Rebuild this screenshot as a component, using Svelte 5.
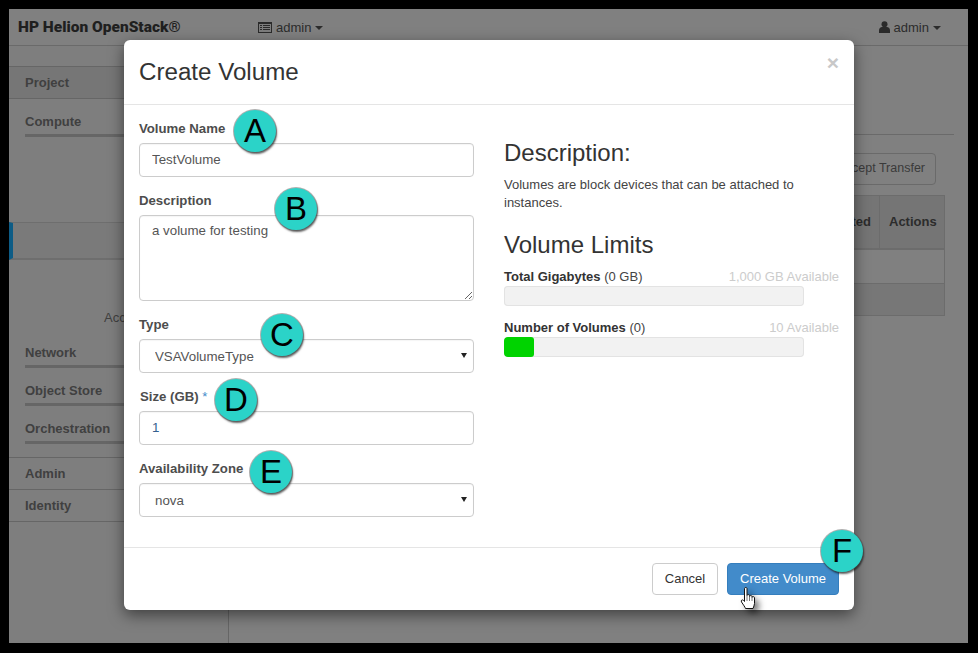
<script>
  const bars = [
    { label: "Total Gigabytes", used: "(0 GB)", avail: "1,000 GB Available", fill: 0 },
    { label: "Number of Volumes", used: "(0)", avail: "10 Available", fill: 10 },
  ];
  const badges = [
    { letter: "A", x: 234, y: 110 },
    { letter: "B", x: 275, y: 188 },
    { letter: "C", x: 261, y: 314 },
    { letter: "D", x: 215, y: 379 },
    { letter: "E", x: 250, y: 451 },
    { letter: "F", x: 821, y: 530 },
  ];
</script>

<div class="screen">
  <div class="window">
    <header class="topbar">
      <div class="brand">HP Helion OpenStack®</div>
      <div class="menu project-menu">
        <svg width="14" height="11" viewBox="0 0 14 11"><path fill="#2a2a2a" d="M0 0h14v11H0z"/><path fill="#7d7d7d" d="M1 2h12v8H1z"/><path fill="#2a2a2a" d="M2 3h2v1H2zM5 3h7v1H5zM2 5h2v1H2zM5 5h7v1H5zM2 7h2v1H2zM5 7h7v1H5z"/></svg>
        <span>admin</span><i class="caret"></i>
      </div>
      <div class="menu user-menu">
        <svg width="11" height="12" viewBox="0 0 11 12"><circle cx="5.5" cy="3.2" r="3" fill="#2a2a2a"/><path fill="#2a2a2a" d="M0 12V9.2C0 7.4 1.4 6 3 6h5c1.600 0 3 1.400 3 3.200V12z"/></svg>
        <span>admin</span><i class="caret"></i>
      </div>
    </header>

    <div class="page">
      <nav class="sidebar">
        <div class="row first">Project</div>
        <div class="group compute">Compute</div>
        <div class="row active"></div>
        <div class="sub">Access &amp; Security</div>
        <div class="group">Network</div>
        <div class="group">Object Store</div>
        <div class="group">Orchestration</div>
        <div class="row admin">Admin</div>
        <div class="row">Identity</div>
      </nav>
      <main class="main">
        <div class="title-line"></div>
        <div class="actions"><button class="ghost">Accept Transfer</button></div>
        <table>
          <thead>
            <tr><th class="created">Created</th><th class="act">Actions</th></tr>
          </thead>
          <tbody>
            <tr class="r1"><td></td><td></td></tr>
            <tr class="r2"><td></td><td></td></tr>
          </tbody>
        </table>
      </main>
    </div>

    <section class="modal">
      <div class="modal-head">
        <h3>Create Volume</h3>
        <span class="close">×</span>
      </div>
      <div class="modal-body">
        <form class="left">
          <div class="field">
            <label for="vn">Volume Name</label>
            <input id="vn" value="TestVolume" />
          </div>
          <div class="field">
            <label for="ds">Description</label>
            <textarea id="ds">a volume for testing</textarea>
          </div>
          <div class="field">
            <label for="ty">Type</label>
            <div class="select">
              <select id="ty"><option>VSAVolumeType</option></select>
            </div>
          </div>
          <div class="field">
            <label for="sz" class="size">Size (GB) <em>*</em></label>
            <input id="sz" class="blue" value="1" />
          </div>
          <div class="field">
            <label for="az">Availability Zone</label>
            <div class="select">
              <select id="az"><option>nova</option></select>
            </div>
          </div>
        </form>
        <aside class="right">
          <h3>Description:</h3>
          <p>Volumes are block devices that can be attached to instances.</p>
          <h3 class="limits">Volume Limits</h3>
          {#each bars as b}
            <div class="quota">
              <div class="quota-text">
                <span><strong>{b.label}</strong> {b.used}</span>
                <span class="avail">{b.avail}</span>
              </div>
              <div class="bar">
                {#if b.fill}<div class="fill" style="width: {b.fill}%"></div>{/if}
              </div>
            </div>
          {/each}
        </aside>
      </div>
      <div class="modal-foot">
        <button class="cancel">Cancel</button>
        <button class="primary">Create Volume</button>
      </div>
    </section>

    {#each badges as b}
      <div class="badge" style="left: {b.x - 9}px; top: {b.y - 9}px">{b.letter}</div>
    {/each}

    <svg class="hand" width="20" height="24" viewBox="0 0 20 24">
      <path fill="#fff" stroke="#111" stroke-width="1" stroke-linejoin="round" d="M4.500 1.500c0-1.300 2.500-1.300 2.500 0v7c0-1.200 2.500-1.200 2.500 0v1c0-1.200 2.500-1.200 2.500 0v1c0-1.200 2.500-1.200 2.500 .2v5.800c0 2-1 3-1.500 5H5.500C5 20 3.500 18 1.500 15c-1-1.600.8-2.800 2-1.600l1 1.100z"/>
      <path stroke="#555" stroke-width=".8" d="M7 9v5M9.500 10v4M12 11v3"/>
    </svg>
  </div>
</div>

<style>
  :global(body) {
    margin: 0;
    background: #000;
  }
  .screen {
    width: 978px;
    height: 653px;
    padding: 9px 10px 10px 9px;
    box-sizing: border-box;
    background: #000;
    font-family: "Liberation Sans", Arial, sans-serif;
    color: #3a3a3a;
    overflow: hidden;
  }
  .window {
    position: relative;
    width: 959px;
    height: 634px;
    background: #808080;
    overflow: hidden;
  }
  .topbar {
    display: flex;
    align-items: center;
    height: 36px;
    border-bottom: 1px solid #6a6a6a;
    color: #2c2c2c;
    font-size: 13px;
  }
  .brand {
    width: 240px;
    padding-left: 9px;
    box-sizing: border-box;
    font-family: Roboto, "Liberation Sans", sans-serif;
    font-weight: 900;
    font-size: 15.5px;
    color: #1f1f1f;
    white-space: nowrap;
  }
  .menu {
    display: flex;
    align-items: center;
  }
  .menu svg {
    margin-right: 4px;
  }
  .project-menu {
    margin-left: 9px;
  }
  .user-menu {
    margin-left: auto;
    margin-right: 27px;
  }
  .caret {
    width: 0;
    height: 0;
    margin-left: 4px;
    margin-top: 2px;
    border-left: 4px solid transparent;
    border-right: 4px solid transparent;
    border-top: 4px solid #2c2c2c;
  }
  .page {
    display: flex;
    height: 597px;
  }
  .sidebar {
    width: 219px;
    flex-shrink: 0;
    border-right: 1px solid #666;
    padding-top: 20px;
    font-size: 13px;
    font-weight: 700;
    color: #404040;
    background: #7e7e7e;
  }
  .row {
    height: 31px;
    line-height: 31px;
    padding-left: 16px;
    border-bottom: 1px solid #666;
  }
  .row.first {
    border-top: 1px solid #666;
    background: #767676;
  }
  .group {
    margin-left: 16px;
    height: 20px;
    padding-top: 2px;
    line-height: 15px;
    border-bottom: 3px solid #666;
    margin-bottom: 13px;
  }
  .group.compute {
    margin-top: 13px;
  }
  .row.active {
    height: 35px;
    margin-top: 85px;
    border-top: 1px solid #6e6e6e;
    border-bottom: 2px solid #6e6e6e;
    border-left: 4px solid #0d5c86;
    padding-left: 0;
    background: #7a7a7a;
  }
  .sub {
    margin-top: 49px;
    margin-bottom: 16px;
    padding-left: 95px;
    font-weight: 400;
    line-height: 18px;
    white-space: nowrap;
  }
  .row.admin {
    border-top: 1px solid #666;
  }
  .main {
    flex: 1;
    padding-top: 88px;
  }
  .title-line {
    margin-right: 14px;
    border-top: 1px solid #6a6a6a;
  }
  .actions {
    display: flex;
    justify-content: flex-end;
    margin: 18px 32px 10px 0;
  }
  .ghost {
    width: 140px;
    height: 32px;
    border: 1px solid #6a6a6a;
    border-radius: 4px;
    background: #808080;
    color: #3a3a3a;
    font: 12.5px "Liberation Sans", Arial, sans-serif;
    text-align: right;
    padding: 0 10px 2px 0;
  }
  table {
    width: 705px;
    margin-left: 11px;
    border-collapse: collapse;
    table-layout: fixed;
    font-size: 13px;
  }
  th {
    height: 50px;
    padding: 0 8px 2px;
    background: #757575;
    border: 1px solid #6c6c6c;
    border-bottom-width: 2px;
    color: #2c2c2c;
  }
  th.created {
    text-align: right;
  }
  th.act {
    width: 47px;
    text-align: left;
    padding-left: 9px;
  }
  td {
    border-top: 1px solid #6c6c6c;
    border-bottom: 1px solid #6c6c6c;
  }
  tr.r1 td {
    height: 31px;
  }
  tr.r2 td {
    height: 29px;
    background: #777;
  }
  td:last-child {
    border-right: 1px solid #6c6c6c;
  }
  .modal {
    position: absolute;
    left: 115px;
    top: 31px;
    width: 730px;
    height: 570px;
    display: flex;
    flex-direction: column;
    background: #fff;
    border-radius: 6px;
    box-shadow: 0 5px 15px rgba(0, 0, 0, 0.5);
  }
  .modal-head {
    display: flex;
    align-items: center;
    justify-content: space-between;
    height: 64px;
    padding: 0 15px;
    border-bottom: 1px solid #e5e5e5;
  }
  .modal-head h3 {
    margin: 0;
    font-size: 24.15px;
    font-weight: 400;
    color: #333;
  }
  .close {
    margin: -20px 0 0;
    font-size: 21px;
    font-weight: 700;
    line-height: 1;
    color: #c8c8c8;
  }
  .modal-body {
    flex: 1;
    display: flex;
    padding: 15px;
  }
  .left {
    width: 335px;
    margin-right: 30px;
  }
  .field {
    margin-bottom: 15px;
  }
  label {
    display: block;
    height: 18px;
    margin-bottom: 5px;
    font-size: 13.2px;
    font-weight: 700;
    line-height: 18px;
    color: #4d4d4d;
  }
  label em {
    color: #428bca;
    font-style: normal;
    font-weight: 400;
  }
  label.size {
    padding-left: 1px;
  }
  input,
  textarea,
  select {
    display: block;
    width: 100%;
    box-sizing: border-box;
    border: 1px solid #ccc;
    border-radius: 4px;
    background: #fff;
    color: #555;
    font: 13.3px "Liberation Sans", Arial, sans-serif;
    box-shadow: inset 0 1px 1px rgba(0, 0, 0, 0.04);
    outline: none;
  }
  input {
    height: 34px;
    padding: 0 12px 2px;
  }
  input.blue {
    color: #35608f;
  }
  textarea {
    height: 86px;
    padding: 6px 12px;
    line-height: 18px;
  }
  .select {
    position: relative;
  }
  .select::after {
    content: "";
    position: absolute;
    right: 7px;
    top: 14px;
    border-left: 3px solid transparent;
    border-right: 3px solid transparent;
    border-top: 5px solid #222;
  }
  select {
    height: 34px;
    padding: 0 12px 0 15px;
    appearance: none;
    -webkit-appearance: none;
  }
  .right {
    width: 335px;
  }
  .right h3 {
    margin: 0;
    font-size: 24px;
    font-weight: 400;
    line-height: 26px;
    color: #333;
  }
  .right > h3:first-child {
    margin-top: 20px;
  }
  .right p {
    margin: 10px 0 0;
    width: 310px;
    font-size: 13px;
    line-height: 18px;
    color: #444;
  }
  .right h3.limits {
    margin-top: 20px;
  }
  .quota {
    margin-top: 10px;
    font-size: 13px;
    color: #444;
  }
  .quota + .quota {
    margin-top: 13px;
  }
  .quota-text {
    display: flex;
    justify-content: space-between;
    height: 18px;
    line-height: 18px;
  }
  .quota-text strong {
    color: #333;
  }
  .avail {
    color: #ccc;
  }
  .bar {
    width: 300px;
    height: 20px;
    border-radius: 4px;
    background: #f2f2f2;
    box-shadow: inset 0 0 0 1px #e3e3e3;
    overflow: hidden;
  }
  .fill {
    height: 100%;
    background: #00d300;
    border-radius: 3px;
  }
  .modal-foot {
    display: flex;
    justify-content: flex-end;
    gap: 9px;
    padding: 15px;
    border-top: 1px solid #e5e5e5;
  }
  .modal-foot button {
    height: 32px;
    border-radius: 4px;
    font: 13px "Liberation Sans", Arial, sans-serif;
    padding: 0 0 2px;
  }
  .cancel {
    width: 66px;
    border: 1px solid #ccc;
    background: #fff;
    color: #333;
  }
  .primary {
    width: 112px;
    border: 1px solid #357ebd;
    background: #428bca;
    color: #fff;
  }
  .badge {
    position: absolute;
    width: 42px;
    height: 41px;
    padding-bottom: 1px;
    display: flex;
    align-items: center;
    justify-content: center;
    border-radius: 50%;
    background: #2bd3c8;
    color: #000;
    font-size: 33px;
    line-height: 1;
    box-shadow: 0 0 0 1px rgba(80, 80, 80, 0.45), 1px 2px 2px rgba(0, 0, 0, 0.6);
  }
  .hand {
    position: absolute;
    left: 731px;
    top: 578px;
    filter: drop-shadow(4px 4px 3px rgba(0, 0, 0, 0.5));
  }
</style>
